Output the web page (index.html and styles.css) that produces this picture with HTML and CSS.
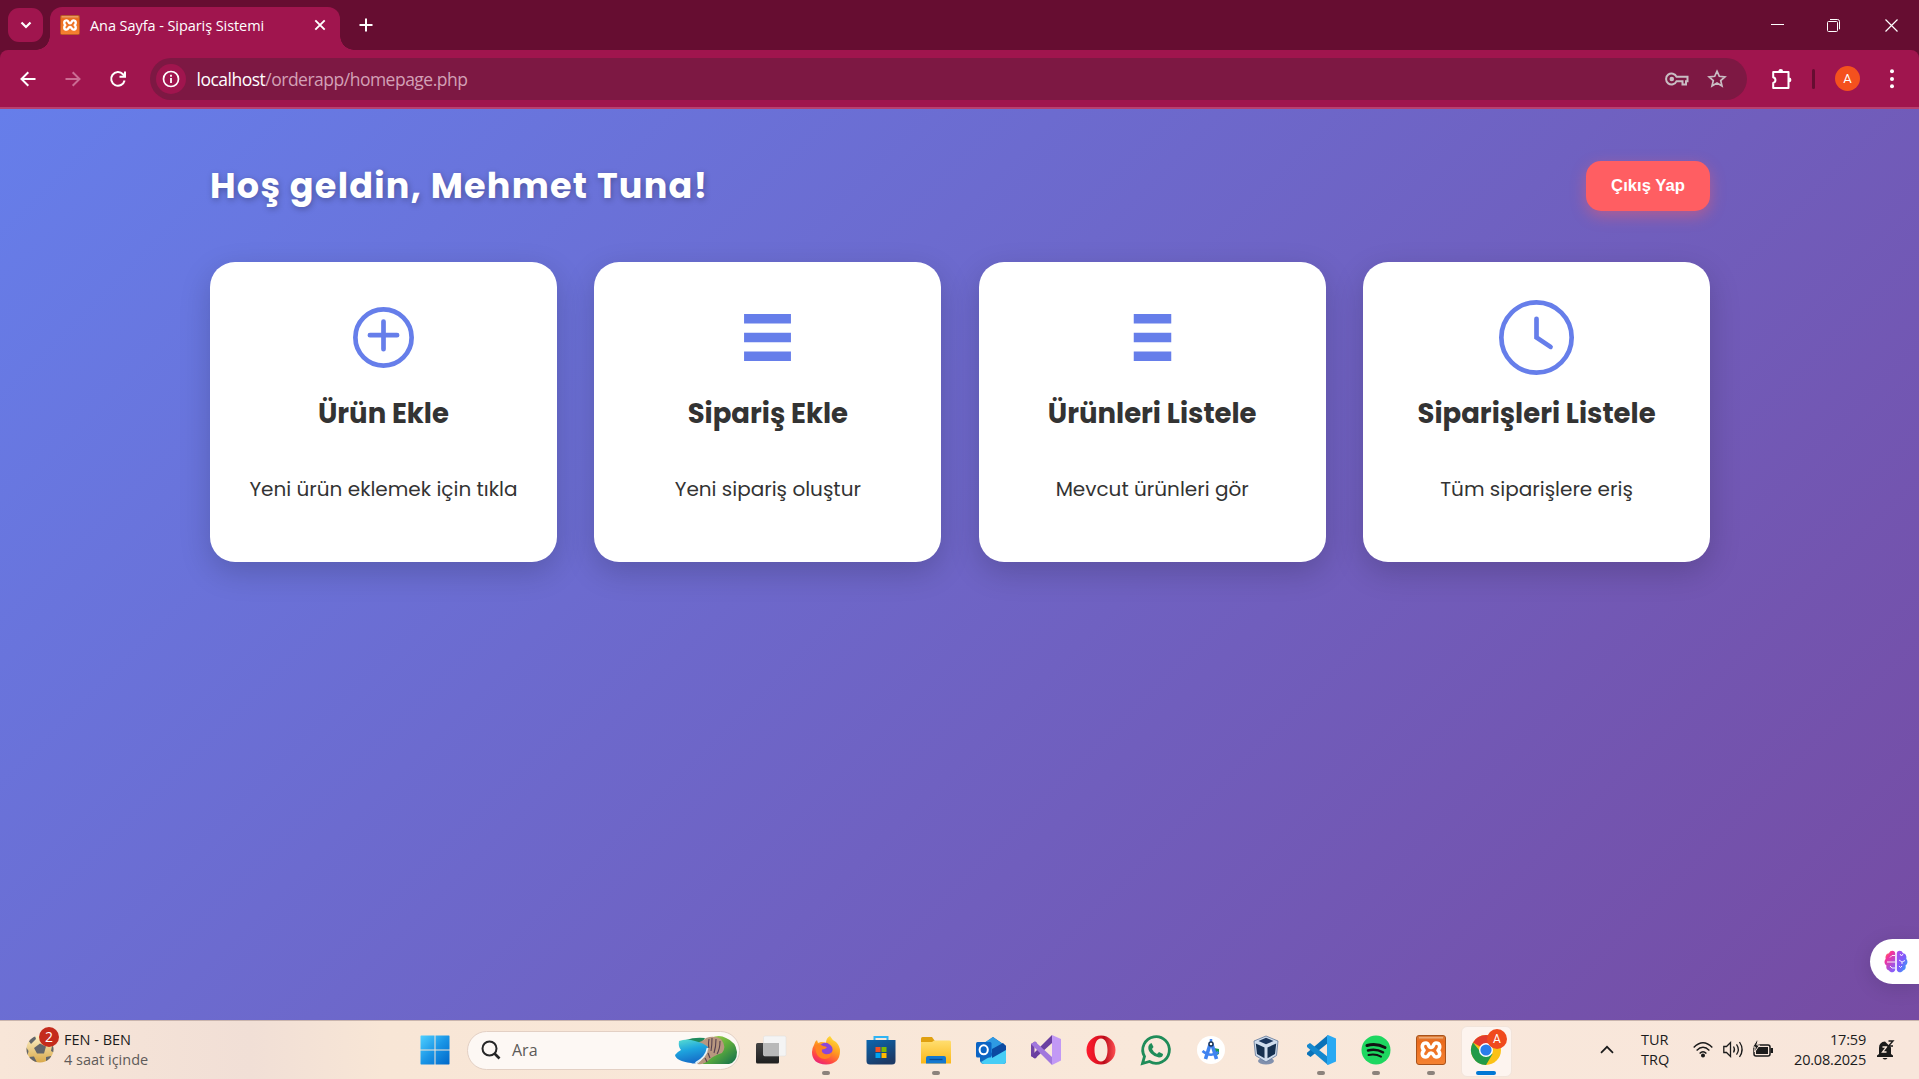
FILE: index.html
```html
<!DOCTYPE html>
<html lang="tr">
<head>
<meta charset="utf-8">
<title>Ana Sayfa - Sipariş Sistemi</title>
<link rel="stylesheet" href="styles.css">
</head>
<body>
<svg class="defs" width="0" height="0" aria-hidden="true">
  <defs>
    <linearGradient id="xg" x1="0" y1="0" x2="0" y2="1"><stop offset="0" stop-color="#d9813f"/><stop offset=".2" stop-color="#ea6a1c"/><stop offset="1" stop-color="#f58232"/></linearGradient>
    <symbol id="xampp" viewBox="0 0 30 30">
      <rect x=".5" y=".5" width="29" height="29" rx="2.5" fill="url(#xg)" stroke="#a8521b"/>
      <path d="M3 2.800h24" stroke="#f0b081" stroke-width="1.300"/>
      <path d="M10 8C13 8 12 12.500 15 12.500S17 8 20 8C24.500 8 24.500 13 22 15.300 24.500 17.500 24.500 22 20 22 17 22 18 18 15 18S13 22 10 22C5.500 22 5.500 17.500 8 15.300 5.500 13 5.500 8 10 8z" fill="none" stroke="#fff" stroke-width="3.600" stroke-linejoin="round"/>
    </symbol>
  </defs>
</svg>

<header class="browser">
  <div class="tabstrip">
    <button class="tab-search"><svg width="12" height="12" viewBox="0 0 12 12"><path d="M1.500 3.500 6 8l4.500-4.500" fill="none" stroke="#fff" stroke-width="2.200"/></svg></button>
    <div class="tab">
      <svg width="20" height="20"><use href="#xampp"/></svg>
      <span class="tab-title">Ana Sayfa - Sipariş Sistemi</span>
      <svg class="tab-close" width="12" height="12" viewBox="0 0 12 12"><path d="M1.300 1.300l9.400 9.400M10.700 1.300l-9.400 9.400" stroke="#fff" stroke-width="1.900"/></svg>
    </div>
    <svg class="new-tab" width="14" height="14" viewBox="0 0 14 14"><path d="M7 .5v13M.5 7h13" stroke="#fff" stroke-width="2"/></svg>
    <div class="window-buttons">
      <svg class="minimize" width="13" height="13" viewBox="0 0 13 13"><path d="M0 5.500h13" stroke="#fff"/></svg>
      <svg width="13" height="13" viewBox="0 0 13 13" fill="none" stroke="#fff"><rect x=".5" y="2.500" width="10" height="10" rx="1"/><path d="M3 .5h7.500a2 2 0 0 1 2 2v7.800"/></svg>
      <svg width="13" height="13" viewBox="0 0 13 13"><path d="M.5.5l12 12M12.500.5l-12 12" stroke="#fff" stroke-width="1.200"/></svg>
    </div>
  </div>
  <div class="toolbar">
    <nav class="nav">
      <svg width="16" height="16" viewBox="0 0 16 16" fill="none" stroke="#fff" stroke-width="2"><path d="M15.500 8H2M8.300 1.200 1.500 8l6.800 6.800"/></svg>
      <svg width="16" height="16" viewBox="0 0 16 16" fill="none" stroke="#cb6c93" stroke-width="2"><path d="M.5 8H14M7.700 1.200 14.500 8l-6.800 6.800"/></svg>
      <svg width="16" height="16" viewBox="0 0 16 16" fill="none" stroke="#fff" stroke-width="2"><path d="M14.600 9.500A6.800 6.800 0 1 1 13 3.300l1.600 1.800M15 .5v5.300H9.500"/></svg>
    </nav>
    <div class="omnibox">
      <span class="site-info"><svg width="18" height="18" viewBox="0 0 18 18"><circle cx="9" cy="9" r="7.500" fill="none" stroke="#fff" stroke-width="1.700"/><path d="M9 8v5M9 4.800v1.900" stroke="#fff" stroke-width="1.800"/></svg></span>
      <span class="url"><b>localhost</b>/orderapp/homepage.php</span>
      <svg class="key" width="24" height="14" viewBox="0 0 24 14" fill="none" stroke="#c9bdc3" stroke-width="2"><path d="M11.600 4.800A5.500 5.500 0 1 0 11.600 9.200H17.500V12.500H21V9.200h1.500V4.800z"/><circle cx="6.800" cy="7" r="2.300" fill="#c9bdc3" stroke="none"/></svg>
      <svg class="star" width="20" height="19" viewBox="0 0 20 19"><path d="M10 2.200l2.300 5.100 5.600.5-4.200 3.700 1.300 5.500L10 14.100 5 17l1.300-5.500-4.200-3.700 5.600-.5z" fill="none" stroke="#c9bdc3" stroke-width="1.700"/></svg>
    </div>
    <svg class="puzzle" width="22" height="22" viewBox="0 0 22 22"><path d="M2.200 4h15.300v16H2.200v-5a3 3 0 0 0 0-5.800z" fill="none" stroke="#fff" stroke-width="2" stroke-linejoin="round"/><path d="M7.300 3.500a2.400 2.400 0 0 1 4.800 0zM18 9.500a2.400 2.400 0 0 1 0 4.800z" fill="#fff"/></svg>
    <i class="divider"></i>
    <span class="avatar">A</span>
    <svg class="menu" width="4" height="20" viewBox="0 0 4 20" fill="#fff"><circle cx="2" cy="2.200" r="2"/><circle cx="2" cy="10" r="2"/><circle cx="2" cy="17.300" r="2"/></svg>
  </div>
</header>

<main class="page">
  <div class="container">
    <div class="head">
      <h1>Hoş geldin, Mehmet Tuna!</h1>
      <button class="logout">Çıkış Yap</button>
    </div>
    <div class="cards">
      <article class="card">
        <svg viewBox="0 0 16 16"><g fill="none" stroke="#667eea" stroke-linecap="round"><circle cx="8" cy="8" r="6"/><path d="M8 4.600v5.900M5.100 7.500h5.800"/></g></svg>
        <h3>Ürün Ekle</h3>
        <p>Yeni ürün eklemek için tıkla</p>
      </article>
      <article class="card">
        <svg viewBox="0 0 16 16" fill="#667eea"><path d="M3 3h10v2H3zM3 7h10v2H3zM3 11h10v2H3z"/></svg>
        <h3>Sipariş Ekle</h3>
        <p>Yeni sipariş oluştur</p>
      </article>
      <article class="card">
        <svg viewBox="0 0 16 16" fill="#667eea"><path d="M4 3h8v2H4zM4 7h8v2H4zM4 11h8v2H4z"/></svg>
        <h3>Ürünleri Listele</h3>
        <p>Mevcut ürünleri gör</p>
      </article>
      <article class="card">
        <svg viewBox="0 0 16 16"><g fill="none" stroke="#667eea" stroke-linecap="round"><circle cx="8" cy="8" r="7.500"/><path d="M8 4v4l3 2"/></g></svg>
        <h3>Siparişleri Listele</h3>
        <p>Tüm siparişlere eriş</p>
      </article>
    </div>
  </div>
  <aside class="assistant">
    <svg width="24" height="23" viewBox="0 0 24 23">
      <defs><linearGradient id="bl" x1="0" y1="0" x2=".6" y2="1"><stop offset="0" stop-color="#ffa02e"/><stop offset=".35" stop-color="#f6339a"/><stop offset="1" stop-color="#8b5cf6"/></linearGradient><linearGradient id="br" x1="0" y1="0" x2="1" y2="1"><stop offset="0" stop-color="#b04be8"/><stop offset=".5" stop-color="#7c5cfc"/><stop offset="1" stop-color="#1fb6f5"/></linearGradient></defs>
      <path d="M11.200 3v17c-1 3-5 3-6.200.5C2.500 20 1.800 17.500 2.500 15.500.5 14.500-.3 11 1.700 9 1 6 2.500 3.500 5 3.300 6 0 10.500 0 11.200 3z" fill="url(#bl)"/>
      <path d="M12.800 3v17c1 3 5 3 6.200.5 2.500-.5 3.200-3 2.500-5 2-1 2.800-4.500.8-6.500.7-3-.8-5.500-3.300-5.700C18 0 13.500 0 12.800 3z" fill="url(#br)"/>
      <path d="M11 5.500H8L6 7.500M3 12h8M6 16l2 2h3M16 4l1.500 2L19 4M15 10l3 2 3-1.500M18 12v2M15 16l1.500 1.500L18 16" fill="none" stroke="#fff" stroke-width=".9"/>
    </svg>
  </aside>
</main>

<footer class="taskbar">
  <div class="widget">
    <div class="ball">
      <svg width="28" height="28" viewBox="0 0 28 28"><defs><linearGradient id="bg" x1="0" y1="0" x2="0" y2="1"><stop offset="0" stop-color="#fbf0c8"/><stop offset="1" stop-color="#d9a94a"/></linearGradient><clipPath id="bc"><circle cx="14" cy="14" r="13.500"/></clipPath></defs><circle cx="14" cy="14" r="13.500" fill="url(#bg)"/><g clip-path="url(#bc)" fill="#62656a"><path d="M8 13l6-4.500 6 3-2 7h-7zM2 5l7-4 1 3-5 5zM0 12l2.500 4-1 5-3-1zM3 22l5-.5 3 6-6 1zM20 22l5-1 1 4-6 3zM26 11l3 1v6l-4-2z"/></g></svg>
      <span class="count">2</span>
    </div>
    <div class="lines"><div>FEN - BEN</div><div class="muted">4 saat içinde</div></div>
  </div>

  <div class="apps">
    <span class="app"><svg width="30" height="30" viewBox="0 0 30 30"><defs><linearGradient id="wn" x1="0" y1="0" x2="1" y2="1"><stop offset="0" stop-color="#4fd0ff"/><stop offset=".5" stop-color="#1a95e6"/><stop offset="1" stop-color="#0067c8"/></linearGradient></defs><path d="M1 .5h13.500V14.500H.5V1zM15.500.5H29l.5.5v13.500h-14zM.5 15.500h14v14H1l-.5-.5zM15.500 15.500h14V29l-.5.500H15.500z" fill="url(#wn)"/></svg></span>
    <div class="search">
      <svg width="20" height="20" viewBox="0 0 20 20" fill="none" stroke="#262626"><circle cx="8.500" cy="8.500" r="7" stroke-width="2" /><path d="M13.500 13.500l5 5" stroke-width="2.600"/></svg>
      <span class="ph">Ara</span>
      <svg class="scene" width="63" height="30" viewBox="0 0 63 30"><defs><linearGradient id="sea" x1="0" y1="0" x2=".3" y2="1"><stop offset="0" stop-color="#5be0d0"/><stop offset=".5" stop-color="#1ea5de"/><stop offset="1" stop-color="#1670c9"/></linearGradient><linearGradient id="gr" x1="0" y1="0" x2="1" y2="1"><stop offset="0" stop-color="#b7d84b"/><stop offset=".5" stop-color="#5fae3c"/><stop offset="1" stop-color="#0e6b4f"/></linearGradient></defs>
        <path d="M12 5q8-3 19-2l-3 5-12 2z" fill="#1f8a5c"/><path d="M37 3q8-4 15 0 10 4 11 14 0 10-8 12H28q12-8 9-26z" fill="url(#gr)"/><path d="M22 8q6-1 10-5 8-3 15 1 6 8 1 14-9 3-13 7-5 5-12 4 8-6 9-14-3-6-10-7z" fill="#b8977f"/><path d="M35 4q-1 6 0 9M38 3q0 8-1 13M42 4q0 8-2 14M46 6q0 8-3 13M34 18l2 5M31 23l2 4" stroke="#57414f" fill="none" stroke-width="1.100"/><path d="M5 6q8-3 16 0 9 2 13 6-1 8-7 12-4 6-10 4Q2 26 1 20q2-3 6-5-3-3-2-9z" fill="url(#sea)"/><path d="M33.500 13q-1 9-12 15" stroke="#e6f4f7" stroke-width="1.800" fill="none"/></svg>
    </div>
    <span class="app"><svg width="30" height="30" viewBox="0 0 30 30"><defs><linearGradient id="tv" x1="0" y1="0" x2="0" y2="1"><stop offset="0" stop-color="#444"/><stop offset="1" stop-color="#1f1f1f"/></linearGradient></defs><rect y="8" width="23" height="20.500" rx="1.500" fill="url(#tv)"/><rect x="7.500" y="1" width="22.500" height="20" rx="1.500" fill="#f4f4f4" stroke="#ddd" stroke-width=".5"/><path d="M7.500 8H23v13H9l-1.500-1z" fill="#b9b9b9"/></svg></span>
    <span class="app run"><svg width="30" height="30" viewBox="0 0 30 30"><defs><linearGradient id="fx" x1=".8" y1="0" x2=".3" y2="1"><stop offset="0" stop-color="#ffe63d"/><stop offset=".45" stop-color="#ff9a1f"/><stop offset=".8" stop-color="#ff4545"/><stop offset="1" stop-color="#e8237b"/></linearGradient></defs><path d="M3 10q1-4 3-5l1 3 3-1q4 0 5 1Q15 3 19 1q2 4 6 6 4 4 4 9 0 13-14 13.500Q1 29 1 17q0-4 2-7z" fill="url(#fx)"/><path d="M9 10q5-4 9-1 5 3 3 8-2 5-7 4-6-1-5-6l3-2z" fill="#8b46d8"/><path d="M4 10q5-2 8 1 3 0 4 1.500-2 2-5 2-1 3 3 4.500 4 1 7-2 0 6-7 7-7 0-9-7z" fill="#ff8420"/></svg></span>
    <span class="app"><svg width="30" height="30" viewBox="0 0 30 30"><defs><linearGradient id="ms" x1="0" y1="0" x2=".5" y2="1"><stop offset="0" stop-color="#0a66ae"/><stop offset="1" stop-color="#1c3a66"/></linearGradient></defs><path d="M8.500 6V2h13v4" fill="none" stroke="#2fb4f4" stroke-width="2"/><path d="M.5 5h29v21q0 3.500-3.500 3.500H4Q.5 29.500.5 26z" fill="url(#ms)"/><path fill="#f25022" d="M9.500 12h5v5h-5z"/><path fill="#7fba00" d="M15.500 12h5v5h-5z"/><path fill="#00a4ef" d="M9.500 18h5v5h-5z"/><path fill="#ffb900" d="M15.500 18h5v5h-5z"/></svg></span>
    <span class="app run"><svg width="30" height="30" viewBox="0 0 30 30"><defs><linearGradient id="fe" x1="0" y1="0" x2="0" y2="1"><stop offset="0" stop-color="#ffde70"/><stop offset="1" stop-color="#fbb818"/></linearGradient></defs><path d="M0 3.500Q0 2 1.500 2H11l2.500 3.500V9H0z" fill="#e0a010"/><path d="M0 7h11l2-1.500h15.500Q30 5.500 30 7v21.500H0z" fill="url(#fe)"/><path d="M5 28.500V23q0-2 2-2h16q2 0 2 2v5.500z" fill="#1478cf"/><path d="M8.500 24.500h13" stroke="#0a4c94" stroke-width="1.300"/></svg></span>
    <span class="app"><svg width="30" height="30" viewBox="0 0 30 30"><path d="M4 11L17 2l13 9v15q0 3-3 3H8q-3 0-4-3z" fill="#1068bd"/><path d="M5 10L17 2l11 8-13 8z" fill="#2e9ae3"/><path d="M30 12v14q0 3-3 3H8q-2 0-3-2z" fill="#46cdf6"/><path d="M16 14l11-6 3 3v4L16 23z" fill="#0b4aa2"/><rect y="7" width="15.500" height="15.500" rx="1.500" fill="#0b64c4"/><ellipse cx="7.700" cy="14.800" rx="4.100" ry="4.500" fill="none" stroke="#fff" stroke-width="2"/></svg></span>
    <span class="app"><svg width="30" height="30" viewBox="0 0 30 30"><path d="M0 9l4-2.500L6 8v14l-2 1.500L0 21z" fill="#7044a6"/><path d="M3.500 11v8L8 15z" fill="#f8e6d8"/><path d="M0 21l4 2.500L21 8V0z" fill="#6a3fa0"/><path d="M4 6.500L0 9l21 21v-8z" fill="#a177dd"/><path d="M21 0l9 4v21.500L21 30z" fill="#c299f5"/></svg></span>
    <span class="app"><svg width="30" height="30" viewBox="0 0 30 30"><defs><linearGradient id="op" x1="0" y1="0" x2="1" y2="0"><stop offset="0" stop-color="#ff1b2d"/><stop offset=".5" stop-color="#d5101f"/><stop offset=".6" stop-color="#b80c1a"/><stop offset="1" stop-color="#ff4f52"/></linearGradient></defs><path fill-rule="evenodd" d="M15 .500a14.500 14.500 0 0 1 0 29 14.500 14.500 0 0 1 0-29zM15 3.500c-4.500 0-6.500 5.500-6.500 11.500s2 11.500 6.500 11.500S21.500 21 21.500 15 19.500 3.500 15 3.500z" fill="url(#op)"/></svg></span>
    <span class="app"><svg width="30" height="30" viewBox="0 0 30 30"><path d="M1.500 28.500l2-7A13.300 13.300 0 1 1 8.500 26.500z" fill="none" stroke="#1f8c59" stroke-width="2.800"/><path d="M10.500 8l2 4-1.500 2q1.500 3.500 5 5l2-2 4 2q0 3.500-4 3.500-4.500-.5-8-4T7.500 11q1-2.500 3-3z" fill="#1f8c59"/></svg></span>
    <span class="app"><svg width="30" height="30" viewBox="0 0 30 30"><circle cx="15" cy="15" r="14" fill="#fff"/><path d="M18 13l5 1v5l-4 2z" fill="#1e9b55"/><path d="M14.500 8L9.500 24M15.500 8l5 16" stroke="#3f83f0" stroke-width="3.600"/><path d="M6.500 16q8 7 16 1" stroke="#3f83f0" stroke-width="2.600" fill="none"/><path d="M15 4v3" stroke="#3f83f0" stroke-width="2.500"/><circle cx="15" cy="9" r="2" fill="#fff" stroke="#1c3454" stroke-width="1.400"/></svg></span>
    <span class="app"><svg width="30" height="30" viewBox="0 0 30 30"><ellipse cx="15" cy="26" rx="8" ry="3.500" fill="#8190ad"/><path d="M15 1l12 5-1.500 14.500L15 27 4.500 20.500 3 6z" fill="#cfdcec" stroke="#5d7598" stroke-width=".8" stroke-linejoin="round"/><path d="M15 2.800L22.500 6 15 9.300 7.500 6z" fill="#1b365d"/><path d="M4.800 8.500l8.700 4v10.800L6 19zM25.200 8.500l-8.700 4v10.800L24 19z" fill="#16304f"/></svg></span>
    <span class="app run"><svg width="30" height="30" viewBox="0 0 30 30"><path d="M22 0v8L4.500 22 1 19.500v-1.800z" fill="#0a72b8"/><path d="M1 10l3-2L22 22v8L1 12z" fill="#1488cf"/><path d="M22 0l8 3.500v23L22 30l-1-1V1z" fill="#29a9f3"/></svg></span>
    <span class="app run"><svg width="30" height="30" viewBox="0 0 30 30"><circle cx="15" cy="15" r="14.500" fill="#1ed760"/><g fill="none" stroke="#121212" stroke-linecap="round"><path d="M6 10.500q9.500-2.500 18 2" stroke-width="3"/><path d="M7 15.500q8-2 15 1.800" stroke-width="2.500"/><path d="M7.500 20q7-1.500 12.500 1.600" stroke-width="2"/></g></svg></span>
    <span class="app run"><svg width="30" height="30"><use href="#xampp"/></svg></span>
    <span class="app active"><svg width="30" height="30" viewBox="0 0 30 30"><circle cx="15" cy="15" r="15" fill="#fbc116"/><path d="M15 15L2 7.500A15 15 0 0 1 28 7.500z" fill="#e33b2e"/><path d="M15 15h-7L2 7.500A15 15 0 0 0 15 30l6.500-11z" fill="#229a48"/><circle cx="15" cy="15" r="7" fill="#fff"/><circle cx="15" cy="15" r="5.600" fill="#2a7de9"/></svg><span class="profile">A</span></span>
  </div>

  <div class="tray">
    <svg class="chev" width="14" height="9" viewBox="0 0 14 9"><path d="M1 7.800l6-6 6 6" fill="none" stroke="#1b1b1b" stroke-width="1.700"/></svg>
    <div class="lines lang"><div>TUR</div><div>TRQ</div></div>
    <svg class="wifi" width="20" height="17" viewBox="0 0 20 17" fill="none" stroke="#1b1b1b" stroke-width="1.400"><path d="M.7 6.500q9.300-9.500 18.600 0M3.600 9.500q6.400-6.500 12.800 0M6.600 12.500q3.400-3.500 6.800 0"/><circle cx="10" cy="14.500" r="1.300" fill="#1b1b1b"/></svg>
    <svg class="vol" width="20" height="17" viewBox="0 0 20 17" fill="none" stroke="#1b1b1b" stroke-width="1.300"><path d="M.8 5.500h2.700L7.500 1.500v14L3.500 11.500H.8zM10.500 5.500q2 3 0 6M13.500 3.300q3.600 5.200 0 10.400M16.500 1q5.200 7.500 0 15"/></svg>
    <svg class="bat" width="20" height="17" viewBox="0 0 20 17"><rect x="1" y="4" width="16" height="11" rx="2" fill="none" stroke="#1b1b1b" stroke-width="1.500"/><path d="M3 6h12v7H3zM17.500 7H20v5h-2.500z" fill="#1b1b1b"/><path d="M3.800-.8L-.3 6h2.500L1.700 11l4.800-7H3.800l1.400-4.800z" fill="#1b1b1b" stroke="#f8e7db"/></svg>
    <div class="lines clock"><div>17:59</div><div>20.08.2025</div></div>
    <svg class="bell" width="18" height="20" viewBox="0 0 18 20"><path d="M2 14V8q0-6 6-6.500l6 6V14l2 1.500V17H0v-1.500zM5.500 18h5q-2.500 3-5 0z" fill="#1b1b1b"/><path d="M5.500 7h4l-4 5h4" fill="none" stroke="#f8e7db" stroke-width="1.300"/><path d="M11.500 1h4.500l-4.500 5H16" fill="none" stroke="#1b1b1b" stroke-width="1.400"/></svg>
  </div>
</footer>
</body>
</html>
```
FILE: styles.css
```css
* { box-sizing: border-box; }
body { margin: 0; width: 1919px; height: 1079px; overflow: hidden; display: flex; flex-direction: column; font-family: "Open Sans", "Noto Sans", sans-serif; }
svg { display: block; flex: none; overflow: visible; }
button { border: 0; padding: 0; font: inherit; }
.defs { position: absolute; }

.browser { height: 109px; flex: none; background: #660d31; }
.tabstrip { height: 50px; display: flex; align-items: center; padding-left: 8px; }
.tab-search { width: 35px; height: 34px; border-radius: 11px; background: #a0154e; display: grid; place-items: center; }
.tab { position: relative; width: 290px; height: 43px; align-self: flex-end; margin-left: 7px; padding: 0 15px 7px 10px; border-radius: 12px 12px 0 0; background: #a0154e; display: flex; align-items: center; color: #fff; }
.tab::before, .tab::after { content: ""; position: absolute; bottom: 0; width: 14px; height: 14px; }
.tab::before { left: -14px; background: radial-gradient(circle at 0 0, transparent 13.5px, #a0154e 14px); }
.tab::after { right: -14px; background: radial-gradient(circle at 100% 0, transparent 13.5px, #a0154e 14px); }
.tab-title { flex: 1; margin-left: 10px; font-size: 14.5px; letter-spacing: -.07px; white-space: nowrap; }
.tab-close { margin-right: -1px; }
.new-tab { margin-left: 19px; }
.window-buttons { margin-left: auto; display: flex; gap: 45px; padding-right: 21px; }
.minimize { margin-right: -2px; }
.toolbar { height: 59px; background: #a0154e; border-bottom: 2px solid #b8406f; border-radius: 8px 8px 0 0; display: flex; align-items: center; }
.nav { display: flex; gap: 29px; padding-left: 20px; width: 150px; }
.omnibox { width: 1597px; height: 42px; border-radius: 21px; background: #7d1843; display: flex; align-items: center; padding: 0 20px 0 6px; }
.site-info { width: 30px; height: 30px; border-radius: 50%; background: #a0154e; display: grid; place-items: center; }
.url { flex: 1; margin-left: 10.5px; padding-top: 1px; font-size: 17.5px; letter-spacing: -.5px; color: #d3a0b6; white-space: nowrap; }
.url b { font-weight: 400; color: #fff; }
.key { margin-right: 18px; }
.puzzle { margin-left: 24px; }
.divider { width: 3px; height: 20px; margin-left: 19px; border-radius: 2px; background: #660d31; }
.avatar { width: 25px; height: 25px; margin-left: 20px; border-radius: 50%; background: #f4511e; color: #fff; font: 13px/25px Roboto, sans-serif; text-align: center; }
.menu { margin-left: 30px; }

.page { position: relative; height: 911px; flex: none; background: linear-gradient(135deg, #667eea, #764ba2); color: #333; font-family: Poppins, Inter, "Noto Sans", sans-serif; }
.container { width: 1500px; margin-left: 210px; padding-top: 52px; }
.head { height: 50px; display: flex; align-items: center; justify-content: space-between; }
h1 { margin: 0; font-size: 35px; line-height: 50px; font-weight: 700; letter-spacing: 1.25px; color: #fff; text-shadow: 1px 2px 6px rgba(0, 0, 0, .28); white-space: nowrap; }
.logout { width: 124px; height: 50px; border-radius: 15px; background: #ff5e62; color: #fff; font: bold 16.67px "Liberation Sans", Arial, sans-serif; box-shadow: 0 5px 15px rgba(255, 94, 98, .45); }
.cards { margin-top: 51px; display: grid; grid-template-columns: repeat(4, 1fr); gap: 37.5px; }
.card { height: 300px; border-radius: 25px; background: #fff; box-shadow: 0 10px 31px rgba(0, 0, 0, .18); display: flex; flex-direction: column; align-items: center; padding-top: 38px; white-space: nowrap; }
.card svg { width: 75px; height: 75px; }
.card h3 { margin: 19px 0 0; font-size: 27.5px; line-height: 40px; font-weight: 700; }
.card p { margin: 40px 0 0; font-size: 20px; line-height: 30px; }
.assistant { position: absolute; right: 0; top: 830px; width: 49px; height: 45px; border-radius: 23px 0 0 23px; background: #fff; display: flex; align-items: center; padding-left: 14px; box-shadow: 0 4px 20px rgba(0, 0, 0, .12); }

.taskbar { height: 59px; flex: none; border-top: 1px solid #c9b5ae; background: linear-gradient(90deg, #f8e6d8, #f1dfd6 13%, #f8e6d6 20%, #f9e8da 60%, #f8e6db); display: flex; font-size: 14.5px; color: #1b1b1b; }
.widget { width: 407px; padding-left: 26px; display: flex; }
.ball { position: relative; margin-top: 14px; }
.count { position: absolute; left: 13px; top: -8px; width: 20px; height: 20px; border-radius: 50%; background: #c42b1c; color: #fff; font-size: 14px; line-height: 20px; text-align: center; }
.lines { line-height: 20px; padding-top: 9px; white-space: nowrap; }
.widget .lines { margin-left: 10px; }
.muted { color: #5f5b59; }
.apps { display: flex; align-items: center; }
.app { position: relative; width: 55px; height: 59px; display: grid; place-items: center; }
.run::after, .active::after { content: ""; position: absolute; bottom: 5px; left: 23.5px; width: 8px; height: 4px; border-radius: 2px; background: #8b827b; }
.active::before { content: ""; position: absolute; left: 3px; top: 5px; width: 49px; height: 49px; border-radius: 6px; background: #fdf4ef; border: 1px solid #f2e4da; }
.active svg { position: relative; }
.active::after { left: 17.5px; width: 20px; background: #0078d4; }
.profile { position: absolute; left: 29px; top: 8px; width: 20px; height: 20px; border-radius: 50%; background: #f04a1d; color: #fff; font: 12px/20px Roboto, sans-serif; text-align: center; }
.search { width: 273px; height: 39px; margin: 0 3px 0 5px; border: 1px solid #e3d0c4; border-radius: 20px; background: #fdf8f4; display: flex; align-items: center; padding: 0 2px 0 13px; }
.ph { flex: 1; margin-left: 11px; font-size: 16px; color: #5c5a58; }
.tray { margin-left: auto; display: flex; align-items: flex-start; }
.chev { margin-top: 24px; }
.lang { margin-left: 27px; width: 27px; text-align: center; }
.wifi { margin: 20px 0 0 25px; }
.vol, .bat { margin: 20px 0 0 10px; }
.clock { width: 93px; text-align: right; letter-spacing: -.2px; }
.bell { margin: 19px 24px 0 11px; }
```
